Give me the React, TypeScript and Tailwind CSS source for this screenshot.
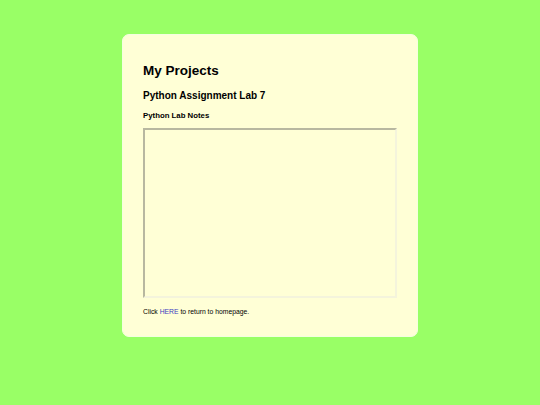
function App() {
  return (
    <div className="min-h-screen w-full bg-[#99ff66] pt-[34px] font-['Liberation_Sans',Arial,sans-serif] text-black">
      <div className="mx-auto w-[296px] rounded-[7px] border border-[#f4ffe0] bg-[#ffffd6] px-[20px] pt-[28px] pb-[20px]">
        <h1 className="text-[13.5px] leading-[15.5px] font-bold">My Projects</h1>
        <h2 className="mt-[11px] text-[10px] leading-[11.5px] font-bold">Python Assignment Lab 7</h2>
        <h3 className="mt-[10px] text-[7.8px] leading-[9px] font-bold">Python Lab Notes</h3>
        <textarea
          className="mt-[8px] block h-[170px] w-full resize-none border-2 border-t-[#b8b8a0] border-l-[#b8b8a0] border-r-[#f4f4dc] border-b-[#f4f4dc] bg-[#ffffd6] outline-none"
        />
        <p className="mt-[10px] text-[6.8px] leading-[7.8px]">
          Click <a href="#" className="text-[#3c3cc0]">HERE</a> to return to homepage.
        </p>
      </div>
    </div>
  );
}

export default App;
